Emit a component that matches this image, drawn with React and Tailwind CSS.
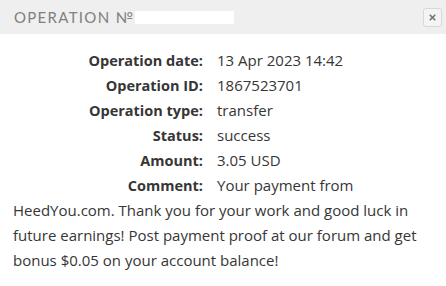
import { X } from 'lucide-react';

const ROWS = [
  ['Operation date:', '13 Apr 2023 14:42'],
  ['Operation ID:', '1867523701'],
  ['Operation type:', 'transfer'],
  ['Status:', 'success'],
  ['Amount:', '3.05 USD'],
];

export default function App() {
  return (
    <div className="w-[446px] h-[286px] bg-white overflow-hidden" style={{ fontFamily: '"Open Sans", sans-serif' }}>
      <div className="h-[34px] bg-[#efefef] flex items-center justify-between pl-[14px] pr-[4px]">
        <div className="flex items-center text-[15px] tracking-[1.3px] text-[#808080] uppercase" style={{ fontFamily: 'Lato, sans-serif' }}>
          <span>Operation №</span>
          <span className="ml-[1px] w-[99px] h-[13px] bg-white" />
        </div>
        <button className="w-[19px] h-[19px] rounded-[3px] border border-[#d8d8d8] bg-[#f4f4f4] flex items-center justify-center text-[#777]">
          <X size={9} strokeWidth={4.5} />
        </button>
      </div>
      <div className="pl-[13px] pr-[26px] pt-[14px] text-[15px] leading-[25px] text-[#363636]">
        {ROWS.map(([label, value]) => (
          <div key={label}>
            <span className="inline-block w-[190px] text-right font-bold text-[14.5px]">{label}</span>
            <span className="ml-[14px]">{value}</span>
          </div>
        ))}
        <div>
          <span className="inline-block w-[190px] text-right font-bold text-[14.5px]">Comment:</span>
          <span className="ml-[14px]">Your payment from HeedYou.com. Thank you for your work and good luck in future earnings! Post payment proof at our forum and get bonus $0.05 on your account balance!</span>
        </div>
      </div>
    </div>
  );
}
